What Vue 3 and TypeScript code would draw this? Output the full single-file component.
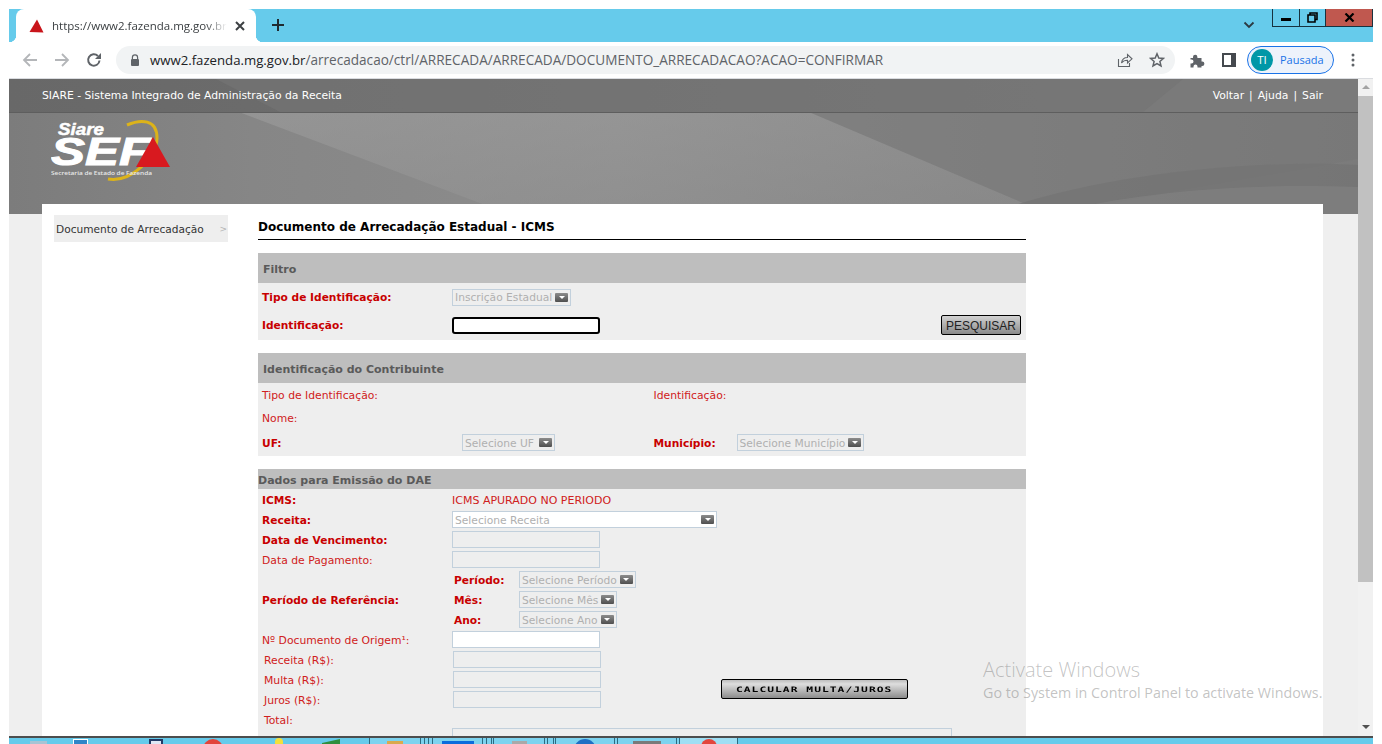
<template>
  <div class="window">
    <div class="titlebar">
      <div class="tab">
        <svg class="favicon" width="15" height="14" viewBox="0 0 15 14"><path d="M8 0.500 14.500 13.500 0.500 13Z" fill="#c9151b" /></svg>
        <span class="tab-title">https://www2.fazenda.mg.gov.br/arrecadacao</span>
        <svg class="tab-close" width="10" height="10" viewBox="0 0 10 10"><path d="M1 1 9 9M9 1 1 9" stroke="#3c4043" stroke-width="2" /></svg>
      </div>
      <svg class="new-tab" width="14" height="14" viewBox="0 0 14 14"><path d="M7 1V13M1 7H13" stroke="#1f2a30" stroke-width="2" /></svg>
      <div class="title-right">
        <svg class="tab-list" width="12" height="8" viewBox="0 0 12 8"><path d="M1.500 1.500 6 6 10.500 1.500" fill="none" stroke="#2b3a42" stroke-width="1.800" /></svg>
        <div class="win-buttons">
          <div class="win-btn min"><span></span></div>
          <div class="win-btn restore">
            <svg width="11" height="11" viewBox="0 0 11 11"><path d="M3 2.500V1H10V7.500H8M1 3H8V10H1Z" fill="none" stroke="#000" stroke-width="1.600" /></svg>
          </div>
          <div class="win-btn close">
            <svg width="11" height="9" viewBox="0 0 11 9"><path d="M1.500 0.500 9.500 8.500M9.500 0.500 1.500 8.500" stroke="#000" stroke-width="2.200" /></svg>
          </div>
        </div>
      </div>
    </div>

    <div class="toolbar">
      <svg class="nav" width="16" height="16" viewBox="0 0 16 16"><path d="M15 8H2M8 2 2 8 8 14" fill="none" stroke="#b4b6b9" stroke-width="1.800" /></svg>
      <svg class="nav" width="16" height="16" viewBox="0 0 16 16"><path d="M1 8H14M8 2 14 8 8 14" fill="none" stroke="#b4b6b9" stroke-width="1.800" /></svg>
      <svg class="nav" width="16" height="16" viewBox="0 0 16 16"><path d="M13.500 8.500A5.700 5.700 0 1 1 11.900 4" fill="none" stroke="#5f6368" stroke-width="2" /><path d="M15 1V7H9Z" fill="#5f6368" /></svg>
      <div class="omnibox">
        <svg width="10" height="12" viewBox="0 0 10 12"><path d="M2.400 5V3.400a2.600 2.600 0 0 1 5.200 0V5" fill="none" stroke="#5f6368" stroke-width="1.200" /><rect x="1" y="5" width="8" height="7" rx="1" fill="#5f6368" /></svg>
        <span class="url"><b>www2.fazenda.mg.gov.br</b>/arrecadacao/ctrl/ARRECADA/ARRECADA/DOCUMENTO_ARRECADACAO?ACAO=CONFIRMAR</span>
        <svg class="omni-icon share" width="16" height="16" viewBox="0 0 16 16"><path d="M1.500 7V14.500H12.500V11M4.500 11C5 7.500 7.500 5.500 10.500 5.500V2.500L15 6.800 10.500 11V8.300C8 8.300 6 9 4.500 11Z" fill="none" stroke="#5f6368" stroke-width="1.100" /></svg>
        <svg class="omni-icon" width="16" height="16" viewBox="0 0 16 16"><path d="M8 1.800 9.800 6 14.400 6.400 10.900 9.400 12 13.900 8 11.500 4 13.900 5.100 9.400 1.600 6.400 6.200 6Z" fill="none" stroke="#5f6368" stroke-width="1.500" /></svg>
      </div>
      <svg class="puzzle" width="16" height="16" viewBox="0 0 16 16"><path d="M1.500 6H4V5A2.200 2.200 0 0 1 8.400 5V6H12.500V9.500H13.200A2.200 2.200 0 0 1 13.200 13.900H12.500V15.500H8.500V14.400A2 2 0 0 0 4.500 14.400V15.500H1.500V11.500H2.500A2 2 0 0 0 2.500 7.500H1.500Z" fill="#5f6368" /></svg>
      <svg class="side-panel" width="14" height="14" viewBox="0 0 14 14"><path d="M0 0H14V14H0Z M2 2V12H9V2Z" fill="#45494e" fill-rule="evenodd" /></svg>
      <div class="profile">
        <span class="avatar">TI</span>
        <span class="paused">Pausada</span>
      </div>
      <svg class="kebab" width="4" height="14" viewBox="0 0 4 14"><circle cx="2" cy="2" r="1.500" fill="#5f6368" /><circle cx="2" cy="7" r="1.500" fill="#5f6368" /><circle cx="2" cy="12" r="1.500" fill="#5f6368" /></svg>
    </div>

    <div class="viewport">
      <div class="page">
        <header class="site-header">
          <svg class="header-art" width="1349" height="135" viewBox="0 0 1349 135" preserveAspectRatio="none">
            <defs>
              <linearGradient id="base" x1="0" y1="0" x2="1" y2="0">
                <stop offset="0" stop-color="#7c7c7c" />
                <stop offset="0.18" stop-color="#868686" />
                <stop offset="0.45" stop-color="#8d8d8d" />
                <stop offset="1" stop-color="#7b7b7b" />
              </linearGradient>
              <linearGradient id="bar" x1="0" y1="0" x2="1" y2="0">
                <stop offset="0" stop-color="#686868" />
                <stop offset="1" stop-color="#797979" />
              </linearGradient>
              <linearGradient id="sheen" x1="0" y1="0" x2="1" y2="1">
                <stop offset="0" stop-color="#a2a2a2" />
                <stop offset="1" stop-color="#8c8c8c" />
              </linearGradient>
            </defs>
            <rect width="1349" height="135" fill="url(#base)" />
            <path d="M230 33H800L1040 135H500Z" fill="url(#sheen)" opacity="0.5" />
            <path d="M800 33H1349V80L1040 135Z" fill="#767676" opacity="0.45" />
            <path d="M980 135C1080 98 1230 80 1349 86V135Z" fill="#747474" opacity="0.8" />
            <path d="M1040 135C1130 112 1240 104 1349 108V135Z" fill="#808080" opacity="0.8" />
            <rect width="1349" height="33" fill="url(#bar)" />
            <path d="M207 0H1349V33H271Z" fill="#767676" opacity="0.55" />
            <path d="M1174 0H1349V33H1134Z" fill="#7e7e7e" opacity="0.5" />
            <rect y="33" width="1349" height="1" fill="#5e5e5e" />
          </svg>
          <div class="header-bar">
            <span>SIARE - Sistema Integrado de Administração da Receita</span>
            <span class="header-links">
              <span>Voltar</span><span>|</span><span>Ajuda</span><span>|</span><span>Sair</span>
            </span>
          </div>
          <svg class="logo" width="124" height="66" viewBox="0 0 124 66">
            <path d="M76 8C90 2 106 2 106 21C106 40 80 66 57 62" fill="none" stroke="#dcb31a" stroke-width="3" />
            <text x="7" y="18" class="logo-siare" textLength="46" lengthAdjust="spacingAndGlyphs">Siare</text>
            <text x="0" y="48" class="logo-sef" textLength="99" lengthAdjust="spacingAndGlyphs">SEF</text>
            <path d="M102 20 119 50H85Z" fill="#d8191f" />
            <text x="0" y="58" class="logo-sub" textLength="101" lengthAdjust="spacingAndGlyphs">Secretaria de Estado de Fazenda</text>
          </svg>
        </header>

        <div class="content">
          <nav class="side-menu">
            <span>Documento de Arrecadação</span>
            <span class="side-arrow">&gt;</span>
          </nav>

          <main class="form">
            <h1 class="form-title">Documento de Arrecadação Estadual - ICMS</h1>

            <section class="block">
              <h2 class="block-head tall">Filtro</h2>
              <div class="block-body">
                <div class="row h28">
                  <label class="req">Tipo de Identificação:</label>
                  <div class="fake-select">Inscrição Estadual<i class="caret"></i></div>
                </div>
                <div class="row h28 search-row">
                  <label class="req">Identificação:</label>
                  <input class="field focused" type="text" />
                  <button class="btn-search" type="button">PESQUISAR</button>
                </div>
                <div class="spacer"></div>
              </div>
            </section>

            <section class="block">
              <h2 class="block-head tall">Identificação do Contribuinte</h2>
              <div class="block-body">
                <div class="row h23 two-col">
                  <label>Tipo de Identificação:</label>
                  <span></span>
                  <label>Identificação:</label>
                </div>
                <div class="row h23"><label>Nome:</label></div>
                <div class="row h27 two-col">
                  <label class="req">UF:</label>
                  <div class="fake-select uf">Selecione UF<i class="caret"></i></div>
                  <div class="city">
                    <label class="req">Município:</label>
                    <div class="fake-select">Selecione Município<i class="caret"></i></div>
                  </div>
                </div>
              </div>
            </section>

            <section class="block">
              <h2 class="block-head short">Dados para Emissão do DAE</h2>
              <div class="block-body">
                <div class="row h20">
                  <label class="req">ICMS:</label>
                  <span class="plain-red">ICMS APURADO NO PERIODO</span>
                </div>
                <div class="row h20">
                  <label class="req">Receita:</label>
                  <div class="fake-select wide">Selecione Receita<i class="caret"></i></div>
                </div>
                <div class="row h20">
                  <label class="req">Data de Vencimento:</label>
                  <div class="field readonly"></div>
                </div>
                <div class="row h20">
                  <label>Data de Pagamento:</label>
                  <div class="field readonly"></div>
                </div>
                <div class="row period">
                  <label class="req">Período de Referência:</label>
                  <div class="period-list">
                    <div v-for="p in periodFields" :key="p.label" class="period-item">
                      <label class="req">{{ p.label }}</label>
                      <div class="fake-select">{{ p.placeholder }}<i class="caret"></i></div>
                    </div>
                  </div>
                </div>
                <div class="row h20">
                  <label>Nº Documento de Origem¹:</label>
                  <input class="field" type="text" />
                </div>
                <div class="money">
                  <label>Receita (R$):</label>
                  <div class="field readonly"></div>
                  <label>Multa (R$):</label>
                  <div class="field readonly"></div>
                  <button class="btn-calc" type="button"><span>CALCULAR MULTA/JUROS</span></button>
                  <label>Juros (R$):</label>
                  <div class="field readonly"></div>
                  <label>Total:</label>
                </div>
                <div class="row total-row">
                  <span></span>
                  <div class="total-box"></div>
                </div>
              </div>
            </section>
          </main>
        </div>

        <div class="activate">
          <div class="activate-big">Activate Windows</div>
          <div class="activate-small">Go to System in Control Panel to activate Windows.</div>
        </div>
      </div>

      <div class="scrollbar">
        <i class="arrow up"></i>
        <div class="thumb"></div>
        <i class="arrow down"></i>
      </div>
    </div>

    <footer class="taskbar">
      <div class="pins">
        <i class="pin p-start"></i>
        <i class="pin p-blue"></i>
        <i class="pin p-dark"></i>
        <i class="pin p-red"></i>
        <i class="pin p-yellow"></i>
        <i class="pin p-green"></i>
      </div>
      <div
        v-for="(t, i) in taskSlots"
        :key="i"
        class="task"
        :class="{ active: t.active }"
        :style="{ width: t.width + 'px' }"
      >
        <i
          v-if="t.color"
          :class="{ round: t.round }"
          :style="{ background: t.color, width: t.icon + 'px', height: t.round ? t.icon + 'px' : undefined }"
        ></i>
      </div>
      <span class="clock">11:38 AM</span>
    </footer>
  </div>
</template>

<script setup lang="ts">
interface PeriodField {
  label: string;
  placeholder: string;
}

interface TaskSlot {
  width: number;
  color?: string;
  icon?: number;
  round?: boolean;
  active?: boolean;
}

const periodFields: PeriodField[] = [
  { label: 'Período:', placeholder: 'Selecione Período' },
  { label: 'Mês:', placeholder: 'Selecione Mês' },
  { label: 'Ano:', placeholder: 'Selecione Ano' }
];

const taskSlots: TaskSlot[] = [
  { width: 51, color: '#d9a94e', icon: 16 },
  { width: 4 },
  { width: 4 },
  { width: 4 },
  { width: 50, color: '#0a6cdc', icon: 32 },
  { width: 4 },
  { width: 5 },
  { width: 2 },
  { width: 51, color: '#a9a9a9', icon: 15 },
  { width: 3 },
  { width: 6 },
  { width: 2 },
  { width: 59, color: '#1f6fc4', icon: 22, round: true },
  { width: 3 },
  { width: 59, color: '#7a7a7a', icon: 28 },
  { width: 3 },
  { width: 59, color: '#e2453c', icon: 16, round: true, active: true }
];
</script>

<style>
html,
body {
  margin: 0;
  background: #fff;
  overflow: hidden;
}
</style>

<style scoped>
.window {
  box-sizing: border-box;
  width: 1382px;
  height: 744px;
  padding: 9px 9px 0;
  display: flex;
  flex-direction: column;
  font-family: "DejaVu Sans", Verdana, sans-serif;
  overflow: hidden;
}

.titlebar {
  height: 33px;
  flex: none;
  background: #66cbeb;
  display: flex;
  align-items: flex-start;
  padding-left: 7px;
}

.tab {
  position: relative;
  width: 240px;
  height: 33px;
  box-sizing: border-box;
  background: #fff;
  border-radius: 8px 8px 0 0;
  display: flex;
  align-items: center;
  padding: 0 11px 0 13px;
}

.tab::before,
.tab::after {
  content: "";
  position: absolute;
  bottom: 0;
  width: 7px;
  height: 7px;
}

.tab::before {
  left: -7px;
  background: radial-gradient(circle at 0 0, transparent 7px, #fff 7.500px);
}

.tab::after {
  right: -7px;
  background: radial-gradient(circle at 100% 0, transparent 7px, #fff 7.500px);
}

.favicon {
  flex: none;
  margin-right: 8px;
}

.tab-title {
  flex: 1;
  width: 175px;
  font: 11.500px "Open Sans", "Noto Sans", sans-serif;
  color: #3c4043;
  white-space: nowrap;
  overflow: hidden;
  -webkit-mask-image: linear-gradient(to right, #000 88%, transparent 100%);
  mask-image: linear-gradient(to right, #000 88%, transparent 100%);
}

.tab-close {
  flex: none;
  margin-left: 8px;
}

.new-tab {
  margin: 9px 0 0 15px;
}

.title-right {
  margin-left: auto;
  display: flex;
  align-items: flex-start;
}

.tab-list {
  margin: 12px 17px 0 0;
}

.win-buttons {
  display: flex;
  height: 18px;
  border: 1px solid #17323f;
  border-top: 0;
  box-sizing: border-box;
}

.win-btn {
  display: flex;
  align-items: center;
  justify-content: center;
  box-sizing: border-box;
  height: 17px;
}

.win-btn.min {
  width: 27px;
  border-right: 1px solid #17323f;
}

.win-btn.min span {
  display: block;
  width: 10px;
  height: 3px;
  margin-top: 3px;
  background: #000;
}

.win-btn.restore {
  width: 26px;
  border-right: 1px solid #17323f;
}

.win-btn.close {
  width: 46px;
  background: #c0584f;
}

.toolbar {
  height: 37px;
  flex: none;
  box-sizing: border-box;
  background: #fff;
  border-bottom: 1px solid #dadce0;
  padding: 4px 0 4px;
  display: flex;
  align-items: center;
}

.nav {
  flex: none;
  margin-left: 13px;
  margin-right: -13px;
  width: 16px;
}

.nav + .nav {
  margin-left: 29px;
}

.nav + .nav + .nav {
  margin-left: 29px;
}

.omnibox {
  flex: none;
  box-sizing: border-box;
  width: 1059px;
  height: 28px;
  margin-left: 27px;
  padding: 0 10px 0 14px;
  border-radius: 14px;
  background: #f1f3f4;
  display: flex;
  align-items: center;
}

.url {
  flex: 1;
  margin-left: 10px;
  margin-top: -2px;
  font: 13.600px "Open Sans", "Noto Sans", sans-serif;
  color: #5f6368;
  white-space: nowrap;
}

.url b {
  font-size: 13.200px;
  font-weight: 400;
  color: #202124;
}

.omni-icon {
  flex: none;
  margin-left: 16px;
}

.puzzle {
  flex: none;
  margin-left: 14px;
}

.side-panel {
  flex: none;
  margin-left: 17px;
}

.profile {
  flex: none;
  box-sizing: border-box;
  width: 87px;
  height: 28px;
  margin-left: 11px;
  padding-left: 3px;
  border: 1px solid #1a73e8;
  border-radius: 14px;
  background: #edf2fb;
  display: flex;
  align-items: center;
}

.avatar {
  width: 22px;
  height: 22px;
  border-radius: 50%;
  background: #0097a7;
  color: #fff;
  font: 11.500px/22px "Open Sans", sans-serif;
  text-align: center;
}

.paused {
  margin-left: 7px;
  margin-top: -2px;
  font: 11px "Open Sans", sans-serif;
  color: #1a73e8;
}

.kebab {
  flex: none;
  margin-left: 17px;
}

.viewport {
  flex: 1;
  min-height: 0;
  display: flex;
  overflow: hidden;
}

.page {
  position: relative;
  width: 1349px;
  flex: none;
  background: #efefef;
  overflow: hidden;
}

.site-header {
  position: relative;
  height: 135px;
  overflow: hidden;
}

.header-art {
  position: absolute;
  left: 0;
  top: 0;
}

.header-bar {
  position: relative;
  height: 32px;
  box-sizing: border-box;
  padding: 0 35px 0 33px;
  display: flex;
  align-items: center;
  justify-content: space-between;
  color: #fff;
  font-size: 10.800px;
}

.header-links {
  display: flex;
  gap: 5px;
}

.logo {
  position: absolute;
  left: 42px;
  top: 38px;
}

.logo-siare {
  font: italic 700 17px "Liberation Sans", sans-serif;
  fill: #fff;
  stroke: #fff;
  stroke-width: 0.500px;
}

.logo-sef {
  font: italic 700 38px "Liberation Sans", sans-serif;
  fill: #fff;
  stroke: #fff;
  stroke-width: 1px;
}

.logo-sub {
  font: 600 6px "Open Sans", sans-serif;
  fill: #e8e8e8;
}

.content {
  position: relative;
  margin: -10px 35px 0 33px;
  padding: 11px 0 0 12px;
  background: #fff;
  display: flex;
  align-items: flex-start;
  height: 640px;
}

.side-menu {
  flex: none;
  width: 174px;
  height: 27px;
  box-sizing: border-box;
  padding: 0 1px 0 2px;
  background: #eee;
  display: flex;
  align-items: center;
  justify-content: space-between;
  font-size: 10.600px;
  color: #333;
}

.side-arrow {
  color: #b5b5b5;
  font-size: 9px;
}

.form {
  flex: none;
  width: 768px;
  margin-left: 30px;
}

.form-title {
  box-sizing: border-box;
  height: 25px;
  margin: 0 0 13px;
  border-bottom: 1px solid #000;
  font-size: 12px;
  line-height: 25px;
  font-weight: 700;
  color: #000;
}

.block {
  margin-bottom: 13px;
}

.block-head {
  margin: 0;
  background: #bebebe;
  color: #5a5a5a;
  font-size: 11px;
  font-weight: 700;
}

.block-head.tall {
  height: 30px;
  line-height: 33px;
  padding-left: 5px;
}

.block-head.short {
  height: 20px;
  line-height: 23px;
}

.block-body {
  background: #eee;
}

.row {
  display: grid;
  grid-template-columns: 190px auto 1fr;
  align-items: center;
  padding-left: 4px;
}

.h28 {
  height: 28px;
}

.h28 label {
  padding-top: 0;
}

.h28 .fake-select {
  padding-top: 0;
}

.h28 .caret {
  margin-top: 0;
}

.h27 {
  height: 27px;
}

.h23 {
  height: 23px;
}

.h20 {
  height: 20px;
}

.spacer {
  height: 1px;
}

label,
.plain-red {
  padding-top: 2px;
  font-size: 10.800px;
  color: #d02020;
  white-space: nowrap;
}

.plain-red {
  font-size: 11px;
}

label.req {
  font-size: 10.650px;
  font-weight: 700;
  color: #c80000;
}

.fake-select {
  box-sizing: border-box;
  display: inline-flex;
  align-items: center;
  justify-content: space-between;
  height: 17px;
  padding: 2px 2px 0;
  border: 1px solid #c2d0dc;
  color: #b0b0b0;
  font-size: 10.700px;
  white-space: nowrap;
  width: max-content;
}

.caret {
  flex: none;
  position: relative;
  width: 13px;
  height: 9px;
  margin: -2px 0 0 3px;
  border-radius: 1px;
  background: linear-gradient(#8c8c8c, #4f4f4f);
}

.caret::after {
  content: "";
  position: absolute;
  left: 3.500px;
  top: 3px;
  border: 3px solid transparent;
  border-top: 3px solid #fff;
  border-bottom: 0;
}

.fake-select.wide {
  width: 265px;
  background: #fff;
}

.fake-select.uf {
  margin-left: 10px;
  width: 93px;
}

.field {
  display: block;
  box-sizing: border-box;
  width: 148px;
  height: 17px;
  padding: 0;
  border: 1px solid #c2d0dc;
  background: #fff;
  outline: none;
}

.field.readonly {
  background: #eee;
}

.field.focused {
  border: 2px solid #000;
  border-radius: 3px;
}

.search-row .btn-search {
  justify-self: end;
  margin: 0 5px 0 0;
}

.btn-search {
  box-sizing: border-box;
  width: 80px;
  height: 20px;
  padding: 2px 0 0;
  border: 1px solid #000;
  border-radius: 2px;
  background: linear-gradient(#d2d2d2, #8a8a8a);
  color: #222;
  font: 12px "Liberation Sans", Arial, sans-serif;
}

.two-col {
  grid-template-columns: 190px 201.500px 1fr;
}

.city {
  display: flex;
  align-items: center;
}

.city label {
  width: 83px;
}

.period {
  height: 60px;
}

.period-list {
  padding-left: 2px;
}

.period-item {
  height: 20px;
  display: flex;
  align-items: center;
}

.period-item label {
  width: 65px;
}

.money {
  display: grid;
  grid-template-columns: 189px 268px 187px;
  grid-auto-rows: 20px;
  align-items: center;
  padding-left: 6px;
}

.money .btn-calc {
  grid-column: 3;
  grid-row: 2 / 4;
}

.money label {
  grid-column: 1;
}

.money .field {
  grid-column: 2;
}

.btn-calc {
  box-sizing: border-box;
  height: 20px;
  padding: 0;
  border: 1px solid #000;
  border-radius: 2px;
  background: linear-gradient(#bdbdbd, #dedede 22%, #8c8c8c);
  color: #000;
  font: 700 7.500px "DejaVu Sans Mono", monospace;
  letter-spacing: 0.700px;
  white-space: nowrap;
}

.btn-calc span {
  display: inline-block;
  transform: scaleX(1.500);
}

.total-row {
  height: 40px;
  align-items: start;
}

.total-box {
  box-sizing: border-box;
  width: 500px;
  height: 40px;
  margin-top: -1px;
  border: 1px solid #c2d0dc;
}

.activate {
  position: absolute;
  left: 974px;
  top: 579px;
  width: 360px;
  color: rgba(110, 110, 110, 0.42);
  font-family: "Open Sans", "Noto Sans", sans-serif;
  white-space: nowrap;
}

.activate-big {
  font-size: 20px;
  font-weight: 300;
  line-height: 24px;
}

.activate-small {
  font-size: 14.300px;
  line-height: 22px;
}

.scrollbar {
  flex: 1;
  background: #f1f1f1;
  display: flex;
  flex-direction: column;
  align-items: center;
}

.arrow {
  flex: none;
  width: 0;
  height: 0;
  border: 4px solid transparent;
}

.arrow.up {
  margin: 6px 0 7px;
  border-top: 0;
  border-bottom: 4px solid #a3a3a3;
}

.arrow.down {
  margin-top: 143px;
  border-bottom: 0;
  border-top: 4px solid #505050;
}

.thumb {
  flex: none;
  width: 100%;
  height: 486px;
  background: #c1c1c1;
}

.taskbar {
  position: relative;
  height: 8px;
  flex: none;
  box-sizing: border-box;
  border-top: 2px solid #4d4d4d;
  background: #66cbeb;
  display: flex;
  overflow: hidden;
}

.pins {
  width: 360px;
  flex: none;
  display: flex;
  align-items: flex-start;
}

.pin {
  flex: none;
  height: 10px;
  display: block;
}

.p-start {
  width: 17px;
  margin: 3px 0 0 21px;
  background: #a7c4d4;
}

.p-blue {
  width: 15px;
  margin: 1px 0 0 26px;
  border: 1px solid #fff;
  box-sizing: border-box;
  background: #2f86c8;
}

.p-dark {
  width: 14px;
  margin: 1px 0 0 61px;
  border: 2px solid #233a66;
  box-sizing: border-box;
  background: #dfe7f5;
}

.p-red {
  width: 20px;
  margin: 1px 0 0 40px;
  border-radius: 50%;
  height: 20px;
  background: #e2453c;
}

.p-yellow {
  width: 8px;
  margin: 0 0 0 52px;
  background: #f3e03c;
  border-radius: 4px 4px 0 0;
}

.p-green {
  width: 18px;
  margin: 1px 0 0 39px;
  background: #2f8f3e;
  clip-path: polygon(0 40%, 100% 0, 100% 100%, 0 100%);
}

.task {
  flex: none;
  box-sizing: border-box;
  border-left: 1px solid #2c6a80;
  background: #7dd3ef;
  display: flex;
  justify-content: center;
  align-items: flex-start;
}

.task.active {
  background: #9fdff4;
  border-right: 1px solid #2c6a80;
}

.task i {
  display: block;
  flex: none;
  height: 10px;
  margin-top: 3px;
}

.task i.round {
  margin-top: 1px;
  border-radius: 50%;
}

.clock {
  position: absolute;
  right: 16px;
  top: 3px;
  font: 11.500px/14px "Open Sans", sans-serif;
  color: #000;
}
</style>
